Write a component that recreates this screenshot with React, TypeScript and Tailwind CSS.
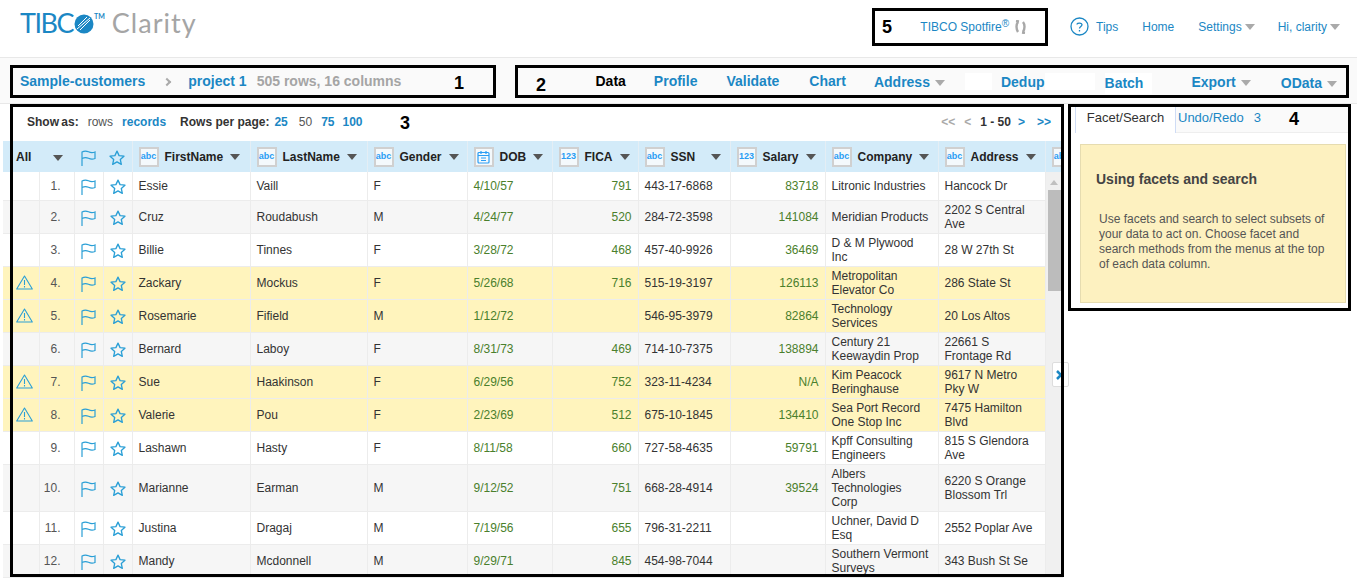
const SANS = 'font-["Liberation_Sans",Arial,sans-serif]';

const COLS = [36, 35, 29, 29, 118, 117, 100, 85, 86, 92, 95, 113, 107];

type Row = {
  n: number;
  first: string;
  last: string;
  g: string;
  dob: string;
  fica: string;
  ssn: string;
  sal: string;
  co: string;
  addr: string;
  warn?: boolean;
  h: string;
};

const ROWS: Row[] = [
  { n: 1, first: 'Essie', last: 'Vaill', g: 'F', dob: '4/10/57', fica: '791', ssn: '443-17-6868', sal: '83718', co: 'Litronic Industries', addr: 'Hancock Dr', h: 'h-[28px]' },
  { n: 2, first: 'Cruz', last: 'Roudabush', g: 'M', dob: '4/24/77', fica: '520', ssn: '284-72-3598', sal: '141084', co: 'Meridian Products', addr: '2202 S Central Ave', h: 'h-[33px]' },
  { n: 3, first: 'Billie', last: 'Tinnes', g: 'F', dob: '3/28/72', fica: '468', ssn: '457-40-9926', sal: '36469', co: 'D & M Plywood Inc', addr: '28 W 27th St', h: 'h-[33px]' },
  { n: 4, first: 'Zackary', last: 'Mockus', g: 'F', dob: '5/26/68', fica: '716', ssn: '515-19-3197', sal: '126113', co: 'Metropolitan Elevator Co', addr: '286 State St', warn: true, h: 'h-[33px]' },
  { n: 5, first: 'Rosemarie', last: 'Fifield', g: 'M', dob: '1/12/72', fica: '', ssn: '546-95-3979', sal: '82864', co: 'Technology Services', addr: '20 Los Altos', warn: true, h: 'h-[33px]' },
  { n: 6, first: 'Bernard', last: 'Laboy', g: 'F', dob: '8/31/73', fica: '469', ssn: '714-10-7375', sal: '138894', co: 'Century 21 Keewaydin Prop', addr: '22661 S Frontage Rd', h: 'h-[33px]' },
  { n: 7, first: 'Sue', last: 'Haakinson', g: 'F', dob: '6/29/56', fica: '752', ssn: '323-11-4234', sal: 'N/A', co: 'Kim Peacock Beringhause', addr: '9617 N Metro Pky W', warn: true, h: 'h-[33px]' },
  { n: 8, first: 'Valerie', last: 'Pou', g: 'F', dob: '2/23/69', fica: '512', ssn: '675-10-1845', sal: '134410', co: 'Sea Port Record One Stop Inc', addr: '7475 Hamilton Blvd', warn: true, h: 'h-[33px]' },
  { n: 9, first: 'Lashawn', last: 'Hasty', g: 'F', dob: '8/11/58', fica: '660', ssn: '727-58-4635', sal: '59791', co: 'Kpff Consulting Engineers', addr: '815 S Glendora Ave', h: 'h-[33px]' },
  { n: 10, first: 'Marianne', last: 'Earman', g: 'M', dob: '9/12/52', fica: '751', ssn: '668-28-4914', sal: '39524', co: 'Albers Technologies Corp', addr: '6220 S Orange Blossom Trl', h: 'h-[47px]' },
  { n: 11, first: 'Justina', last: 'Dragaj', g: 'M', dob: '7/19/56', fica: '655', ssn: '796-31-2211', sal: '', co: 'Uchner, David D Esq', addr: '2552 Poplar Ave', h: 'h-[33px]' },
  { n: 12, first: 'Mandy', last: 'Mcdonnell', g: 'M', dob: '9/29/71', fica: '845', ssn: '454-98-7044', sal: '', co: 'Southern Vermont Surveys', addr: '343 Bush St Se', h: 'h-[33px]' },
];

function Caret({ className = 'border-t-[#555]' }: { className?: string }) {
  return <span className={`inline-block w-0 h-0 border-x-[5px] border-x-transparent border-t-[6px] ${className}`} />;
}

function Flag() {
  return (
    <svg width="15" height="16" viewBox="0 0 15 16" fill="none" stroke="#2a9fd6" strokeWidth="1.2" className="mx-auto">
      <path d="M1 16V2C3.500 .6 5.500 .8 7.500 1.800s4 1.200 6.500.2V8.500C11.500 9.500 9.500 9.200 7.500 8.300S3.500 7.300 1 8.500" />
    </svg>
  );
}

function Star() {
  return (
    <svg width="16" height="16" viewBox="0 0 17 17" fill="none" stroke="#2a9fd6" strokeWidth="1.4" strokeLinejoin="round" className="mx-auto">
      <path d="M8.500 1.200l2.200 4.800 5.200.6-3.900 3.500 1.100 5.200-4.600-2.700-4.600 2.700 1.100-5.200L1.100 6.600l5.200-.6z" />
    </svg>
  );
}

function Warn() {
  return (
    <svg width="17" height="15" viewBox="0 0 17 15" fill="none" stroke="#2a9fd6" strokeWidth="1.1" strokeLinejoin="round" className="mx-auto">
      <path d="M8.500 1L16.300 14H.7z" />
      <path d="M8.500 5v5M8.500 11v1.500" />
    </svg>
  );
}

function TypeBadge({ kind }: { kind: 'abc' | '123' | 'date' }) {
  return (
    <span className="inline-flex items-center justify-center w-[20px] h-[20px] border-2 border-[#d0d0d0] bg-[#f4f9fc] text-[9px] font-bold text-[#2a9df4] leading-none shrink-0">
      {kind === 'date' ? (
        <svg width="13" height="14" viewBox="0 0 13 14" fill="none" stroke="#2a9df4" strokeWidth="1.2">
          <rect x="1" y="2.500" width="11" height="10.500" rx="1" />
          <path d="M1 5.500h11M4 1v3M9 1v3M4 8h5M4 10.500h5" />
        </svg>
      ) : (
        kind
      )}
    </span>
  );
}

function HeadCell({ label, kind, caretGap = 'ml-[1px]' }: { label: string; kind: 'abc' | '123' | 'date'; caretGap?: string }) {
  return (
    <th className="border-r border-[#e4eef5] px-[6px] font-bold text-left align-middle">
      <div className="flex items-center gap-[6px] whitespace-nowrap">
        <TypeBadge kind={kind} />
        <span>{label}</span>
        <span className={`flex ${caretGap}`}><Caret /></span>
      </div>
    </th>
  );
}

function Colgroup({ extra }: { extra?: number }) {
  const widths = extra ? [...COLS, extra] : COLS;
  return (
    <colgroup>
      {widths.map((w, i) => (
        <col key={i} style={{ width: w }} />
      ))}
    </colgroup>
  );
}

function DataRow({ row }: { row: Row }) {
  const bg = row.warn ? 'bg-[#fff4bd]' : row.n % 2 === 0 ? 'bg-[#f6f6f6]' : 'bg-white';
  const td = 'border-r border-b border-[#ececec] align-middle leading-[14px] px-[6px] py-0';
  return (
    <tr className={`${bg} ${row.h}`}>
      <td className={`${td} !pl-[8px] !pr-0 text-center`}>{row.warn && <Warn />}</td>
      <td className={`${td} !pl-0 !pr-[13px] text-right text-[#555]`}>{row.n}.</td>
      <td className={`${td} !px-0 !pt-[3px]`}><Flag /></td>
      <td className={`${td} !px-0 !pt-[3px]`}><Star /></td>
      <td className={td}>{row.first}</td>
      <td className={td}>{row.last}</td>
      <td className={td}>{row.g}</td>
      <td className={`${td} text-[#4a7f2c]`}>{row.dob}</td>
      <td className={`${td} text-[#4a7f2c] text-right`}>{row.fica}</td>
      <td className={td}>{row.ssn}</td>
      <td className={`${td} text-[#4a7f2c] text-right`}>{row.sal}</td>
      <td className={`${td} !pr-[8px]`}>{row.co}</td>
      <td className={td}>{row.addr}</td>
    </tr>
  );
}

function NavItem({ label, caret, active }: { label: string; caret?: boolean; active?: boolean }) {
  return (
    <span className={`flex items-center gap-[5px] ${active ? 'text-black' : 'text-[#1b87c4]'}`}>
      {label}
      {caret && <Caret className="border-t-[#aaa]" />}
    </span>
  );
}

export default function App() {
  return (
    <div className={`${SANS} relative w-[1357px] h-[580px] overflow-hidden bg-white text-[12px] text-[#333]`}>
      {/* Top bar */}
      <header className="h-[58px] border-b border-[#e8e8e8] flex items-start">
        <div className="ml-[20px] mt-[7px] flex items-baseline font-['Lato',sans-serif] text-[27px] leading-[32px]">
          <span className="text-[#1b87c4] tracking-[-1.5px]">TIBC</span>
          <svg width="20" height="20" viewBox="0 0 20 20" className="self-center ml-[1px] mt-[1px]">
            <circle cx="10" cy="10" r="9.500" fill="#1b87c4" />
            <path d="M3 15L16 4M6 16l10-10M4 12l9-9" stroke="#fff" strokeWidth="1" />
          </svg>
          <span className="text-[#1b87c4] text-[7px] font-bold leading-none self-start mt-[6px] mr-[7px]">TM</span>
          <span className="text-[#a5a5a5] tracking-[1px]">Clarity</span>
        </div>
        <div className="ml-auto mt-[17px] flex items-center text-[#1b87c4]">
          <span className="flex items-center text-[12px]">
            TIBCO Spotfire<span className="text-[10px] leading-none self-start mt-[1px]">®</span>
            <svg width="15" height="14" viewBox="0 0 15 14" fill="none" stroke="#a8a8a8" strokeWidth="2.400" className="ml-[4px]">
              <path d="M5 2C3 4.500 3 9 5 12M10 2c2 2.500 2 7 0 10" />
              <path d="M3 1l3 .5M12 13l-3-.5" />
            </svg>
          </span>
          <svg width="19" height="19" viewBox="0 0 19 19" fill="none" stroke="#1b87c4" strokeWidth="1.3" className="ml-[42px] mr-[7px]">
            <circle cx="9.500" cy="9.500" r="8.500" />
            <path d="M7 7.500C7 5.500 12 5.500 12 7.800c0 1.700-2.500 1.700-2.500 3.700M9.500 13v1.500" />
          </svg>
          <span>Tips</span>
          <span className="ml-[24px]">Home</span>
          <span className="ml-[24px] flex items-center gap-[3px]">Settings<Caret className="border-t-[#aaa]" /></span>
          <span className="ml-[23px] mr-[17px] flex items-center gap-[3px]">Hi, clarity<Caret className="border-t-[#aaa]" /></span>
        </div>
      </header>

      {/* Breadcrumb and tool tabs */}
      <div className="h-[46px] bg-[#fafafa] border-b border-[#e8e8e8] flex items-center font-bold text-[14px] pt-[2px]">
        <span className="ml-[20px] text-[#1b87c4]">Sample-customers</span>
        <span className="ml-[19px] w-[6px] h-[6px] border-t-2 border-r-2 border-[#aaa] rotate-45" />
        <span className="ml-[18px] text-[#1b87c4]">project 1</span>
        <span className="ml-[10px] text-[#a5a5a5]">505 rows, 16 columns</span>
        <div className="ml-auto mr-[20px] flex items-center">
          <NavItem label="Data" active />
          <span className="ml-[28px]"><NavItem label="Profile" /></span>
          <span className="ml-[29px]"><NavItem label="Validate" /></span>
          <span className="ml-[30px]"><NavItem label="Chart" /></span>
          <span className="ml-[28px] mt-[2px]"><NavItem label="Address" caret /></span>
          <span className="ml-[20px] w-[27px] h-[17px] bg-white" />
          <span className="ml-[9px] mt-[2px]"><NavItem label="Dedup" /></span>
          <span className="w-[50px] h-[17px] bg-white" />
          <span className="ml-[10px] pr-[9px] bg-white mt-[4px]"><NavItem label="Batch" /></span>
          <span className="ml-[39px] mt-[2px]"><NavItem label="Export" caret /></span>
          <span className="ml-[30px] mt-[4px]"><NavItem label="OData" caret /></span>
        </div>
      </div>

      <div className="flex">
        {/* Data grid */}
        <section className="w-[1068px] pl-[3px] shrink-0">
          <div className="h-[37px] flex items-center text-[12px] pb-[1px]">
            <span className="ml-[24px] font-bold [word-spacing:-1px]">Show as:</span>
            <span className="ml-[9px] text-[#555]">rows</span>
            <span className="ml-[9px] font-bold text-[#1b87c4]">records</span>
            <span className="ml-[14px] font-bold">Rows per page:</span>
            <span className="ml-[5px] font-bold text-[#1b87c4]">25</span>
            <span className="ml-[11px] text-[#555]">50</span>
            <span className="ml-[9px] font-bold text-[#1b87c4]">75</span>
            <span className="ml-[8px] font-bold text-[#1b87c4]">100</span>
            <span className="ml-auto mr-[17px] flex font-bold">
              <span className="text-[#aaa]">&lt;&lt;</span>
              <span className="ml-[9px] text-[#aaa]">&lt;</span>
              <span className="ml-[9px]">1 - 50</span>
              <span className="ml-[7px] text-[#1b87c4]">&gt;</span>
              <span className="ml-[12px] text-[#1b87c4]">&gt;&gt;</span>
            </span>
          </div>

          <div className="w-[1059px] overflow-hidden bg-[#d3ebf9]">
            <table className="table-fixed border-collapse w-[1150px]">
              <Colgroup extra={108} />
              <thead>
                <tr className="h-[31px] text-[#222]">
                  <th className="text-left pl-[13px] font-bold">All</th>
                  <th className="text-center"><span className="inline-flex pl-[3px]"><Caret /></span></th>
                  <th className="pt-[2px]"><Flag /></th>
                  <th className="pt-[2px] border-r border-[#e4eef5]"><Star /></th>
                  <HeadCell label="FirstName" kind="abc" />
                  <HeadCell label="LastName" kind="abc" />
                  <HeadCell label="Gender" kind="abc" />
                  <HeadCell label="DOB" kind="date" />
                  <HeadCell label="FICA" kind="123" />
                  <HeadCell label="SSN" kind="abc" caretGap="ml-[10px]" />
                  <HeadCell label="Salary" kind="123" />
                  <HeadCell label="Company" kind="abc" />
                  <HeadCell label="Address" kind="abc" />
                  <th className="text-left pl-[6px]"><TypeBadge kind="abc" /></th>
                </tr>
              </thead>
            </table>
          </div>

          <div className="flex">
            <table className="table-fixed border-collapse w-[1042px] shrink-0">
              <Colgroup />
              <tbody>
                {ROWS.map((row) => (
                  <DataRow key={row.n} row={row} />
                ))}
              </tbody>
            </table>
            {/* Scrollbar */}
            <div className="w-[17px] bg-[#f0f0f0] flex flex-col items-center">
              <span className="mt-[8px] mb-[5px] w-0 h-0 border-x-[4px] border-x-transparent border-b-[5px] border-b-[#c0c0c0]" />
              <span className="w-[13px] h-[101px] bg-[#bcbcbc]" />
            </div>
          </div>
        </section>

        {/* Right panel */}
        <aside className="ml-[7px] w-[275px]">
          <div className="h-[29px] bg-[#fafafa] border-b border-[#eee] flex text-[13px]">
            <span className="w-[101px] h-[29px] bg-white border-x border-[#cfdcf5] text-[#333] flex items-center justify-center pb-[2px]">Facet/Search</span>
            <span className="ml-[2px] text-[#1b87c4] flex items-center">Undo/Redo</span>
            <span className="ml-[10px] text-[#1b87c4] flex items-center">3</span>
          </div>
          <div className="mt-[11px] ml-[5px] w-[266px] h-[159px] bg-[#fdf1c0] border border-[#e6dcb0] pt-[26px] pl-[15px] pr-[12px]">
            <h3 className="font-bold text-[14px] leading-[16px] text-[#444]">Using facets and search</h3>
            <p className="mt-[25px] ml-[3px] leading-[15px] text-[#555]">
              Use facets and search to select subsets of your data to act on. Choose facet and search methods from the menus at the top of each data column.
            </p>
          </div>
        </aside>
      </div>

      {/* Panel collapse handle */}
      <span className="absolute left-[1052px] top-[362px] w-[17px] h-[25px] bg-white border border-[#ddd] rounded-[2px] flex items-center pl-[3px]">
        <svg width="7" height="10" viewBox="0 0 7 10" fill="none" stroke="#1b87c4" strokeWidth="2.500">
          <path d="M1 1l4 4-4 4" />
        </svg>
      </span>

      {/* Numbered callouts drawn over the screenshot */}
      <div className="absolute left-[10px] top-[65px] w-[486px] h-[33px] border-[3px] border-black" />
      <div className="absolute left-[515px] top-[65px] w-[834px] h-[33px] border-[3px] border-black" />
      <div className="absolute left-[10px] top-[104px] w-[1054px] h-[473px] border-[3px] border-black" />
      <div className="absolute left-[1068px] top-[104px] w-[283px] h-[207px] border-[3px] border-black" />
      <div className="absolute left-[872px] top-[8px] w-[176px] h-[38px] border-[3px] border-black" />
      <span className="absolute left-[454px] top-[72px] text-[18px] leading-[22px] font-bold text-black">1</span>
      <span className="absolute left-[536px] top-[74px] text-[18px] leading-[22px] font-bold text-black">2</span>
      <span className="absolute left-[400px] top-[112px] text-[18px] leading-[22px] font-bold text-black">3</span>
      <span className="absolute left-[1289px] top-[108px] text-[18px] leading-[22px] font-bold text-black">4</span>
      <span className="absolute left-[882px] top-[16px] text-[18px] leading-[22px] font-bold text-black">5</span>
    </div>
  );
}
